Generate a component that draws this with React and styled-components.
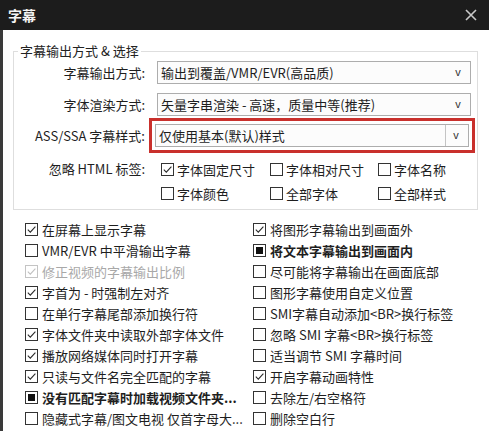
import React from "react";
import styled, { createGlobalStyle } from "styled-components";

const Global = createGlobalStyle`
  html, body { margin: 0; padding: 0; background: #ffffff; }
  body { font-family: "Noto Sans CJK SC", "Noto Sans", sans-serif; }
`;

const Window = styled.div`
  width: 489px;
  height: 431px;
  overflow: hidden;
  display: flex;
  flex-direction: column;
  background: #ffffff;
  color: #1e1e1e;
  font-size: 13px;
`;

const TitleBar = styled.div`
  height: 30px;
  flex: none;
  background: #1c1c1c;
  display: flex;
  align-items: center;
  justify-content: space-between;
  padding: 0 12px 0 8px;
`;

const Title = styled.span`
  color: #f4f4f4;
  font-size: 14px;
  font-weight: 700;
  line-height: 30px;
`;

const Body = styled.div`
  flex: 1;
  border-left: 3px solid #3a3a3a;
  padding: 12px 11px 0 10px;
  display: flex;
  flex-direction: column;
`;

const Group = styled.fieldset`
  margin: 0;
  padding: 0 6px 6px 0;
  border: 1px solid #dedede;
  min-width: 0;
`;

const Legend = styled.legend`
  margin-left: 4px;
  padding: 0 2px;
  font-size: 13px;
  line-height: 18px;
  color: #222;
`;

const FormRow = styled.div`
  display: grid;
  grid-template-columns: 131px 1fr;
  column-gap: ${(p) => p.$gap ?? 12}px;
  align-items: ${(p) => (p.$top ? "start" : "center")};
  margin-top: ${(p) => p.$mt}px;
`;

const Label = styled.span`
  text-align: right;
  line-height: ${(p) => p.$lh ?? 23}px;
  white-space: nowrap;
  color: #1e1e1e;
`;

const Combo = styled.div`
  height: 23px;
  box-sizing: border-box;
  border: 1px solid #adadad;
  background: #fcfcfc;
  display: flex;
  align-items: stretch;
  outline: ${(p) => (p.$highlight ? "3px solid #c9302c" : "none")};
  outline-offset: 3px;
  margin-left: ${(p) => (p.$highlight ? -2 : 0)}px;
  margin-right: ${(p) => (p.$highlight ? 2 : 0)}px;
`;

const ComboText = styled.span`
  flex: 1;
  padding-left: 3px;
  line-height: 21px;
  white-space: nowrap;
  overflow: hidden;
`;

const ComboArrow = styled.span`
  width: 20px;
  flex: none;
  display: flex;
  align-items: center;
  justify-content: center;
  border-left: ${(p) => (p.$divided ? "1px solid #c4c4c4" : "none")};
  font-family: "Liberation Sans", sans-serif;
  font-size: 11px;
  color: #333;
  padding-right: 2px;
  padding-bottom: 1px;
`;

const TagGrid = styled.div`
  display: grid;
  grid-template-columns: 109px 108px 1fr;
  row-gap: 4px;
  padding-left: 4px;
`;

const OptionGrid = styled.div`
  display: grid;
  grid-template-columns: 228px 1fr;
  grid-auto-rows: 21px;
  margin-top: 9px;
  padding-left: 12px;
`;

const Option = styled.label`
  display: flex;
  align-items: center;
  gap: ${(p) => p.$gap ?? 4}px;
  height: ${(p) => p.$h ?? 21}px;
  white-space: nowrap;
  overflow: hidden;
  font-weight: ${(p) => (p.$bold ? 700 : 400)};
  color: ${(p) => (p.$disabled ? "#a8a8a8" : "#1e1e1e")};
`;

const Box = styled.span`
  width: 13px;
  height: 13px;
  flex: none;
  box-sizing: border-box;
  border: 1px solid ${(p) => (p.$disabled ? "#c4c4c4" : "#333")};
  background: #fff;
  display: flex;
  align-items: center;
  justify-content: center;
`;

const Fill = styled.span`
  width: 7px;
  height: 7px;
  background: #111;
`;

function Check({ state, disabled }) {
  return (
    <Box $disabled={disabled}>
      {state === "checked" && (
        <svg width="11" height="11" viewBox="0 0 11 11">
          <polyline
            points="1.8,5.6 4.3,8.1 9.4,2.6"
            fill="none"
            stroke={disabled ? "#c0c0c0" : "#2a2a2a"}
            strokeWidth="1.1"
          />
        </svg>
      )}
      {state === "mixed" && <Fill />}
    </Box>
  );
}

function Opt({ state, label, bold, disabled, h, gap }) {
  return (
    <Option $bold={bold} $disabled={disabled} $h={h} $gap={gap}>
      <Check state={state} disabled={disabled} />
      <span>{label}</span>
    </Option>
  );
}

const CloseIcon = () => (
  <svg width="12" height="12" viewBox="0 0 12 12">
    <path d="M1 1L11 11M11 1L1 11" stroke="#c8c8c8" strokeWidth="1.6" />
  </svg>
);

const left = [
  { s: "checked", t: "在屏幕上显示字幕" },
  { s: "", t: "VMR/EVR 中平滑输出字幕" },
  { s: "checked", t: "修正视频的字幕输出比例", d: true },
  { s: "checked", t: "字首为 - 时强制左对齐" },
  { s: "", t: "在单行字幕尾部添加换行符" },
  { s: "checked", t: "字体文件夹中读取外部字体文件" },
  { s: "checked", t: "播放网络媒体同时打开字幕" },
  { s: "checked", t: "只读与文件名完全匹配的字幕" },
  { s: "mixed", t: "没有匹配字幕时加载视频文件夹...", b: true },
  { s: "", t: "隐藏式字幕/图文电视 仅首字母大..." },
];

const right = [
  { s: "checked", t: "将图形字幕输出到画面外" },
  { s: "mixed", t: "将文本字幕输出到画面内", b: true },
  { s: "", t: "尽可能将字幕输出在画面底部" },
  { s: "", t: "图形字幕使用自定义位置" },
  { s: "", t: "SMI字幕自动添加<BR>换行标签" },
  { s: "", t: "忽略 SMI 字幕<BR>换行标签" },
  { s: "", t: "适当调节 SMI 字幕时间" },
  { s: "checked", t: "开启字幕动画特性" },
  { s: "", t: "去除左/右空格符" },
  { s: "", t: "删除空白行" },
];

export default function App() {
  const rows = [];
  for (let i = 0; i < left.length; i++) {
    rows.push(
      <Opt key={"l" + i} state={left[i].s} label={left[i].t} bold={left[i].b} disabled={left[i].d} />
    );
    rows.push(
      <Opt key={"r" + i} state={right[i].s} label={right[i].t} bold={right[i].b} disabled={right[i].d} />
    );
  }
  return (
    <>
      <Global />
      <Window>
        <TitleBar>
          <Title>字幕</Title>
          <CloseIcon />
        </TitleBar>
        <Body>
          <Group>
            <Legend>字幕输出方式 &amp; 选择</Legend>
            <FormRow $mt={1}>
              <Label>字幕输出方式:</Label>
              <Combo>
                <ComboText>输出到覆盖/VMR/EVR(高品质)</ComboText>
                <ComboArrow>v</ComboArrow>
              </Combo>
            </FormRow>
            <FormRow $mt={9}>
              <Label>字体渲染方式:</Label>
              <Combo>
                <ComboText>矢量字串渲染 - 高速，质量中等(推荐)</ComboText>
                <ComboArrow>v</ComboArrow>
              </Combo>
            </FormRow>
            <FormRow $mt={8}>
              <Label>ASS/SSA 字幕样式:</Label>
              <Combo $highlight>
                <ComboText>仅使用基本(默认)样式</ComboText>
                <ComboArrow $divided>v</ComboArrow>
              </Combo>
            </FormRow>
            <FormRow $mt={12} $top>
              <Label $lh={20}>忽略 HTML 标签:</Label>
              <TagGrid>
                <Opt state="checked" label="字体固定尺寸" h={20} gap={3} />
                <Opt state="" label="字体相对尺寸" h={20} gap={3} />
                <Opt state="" label="字体名称" h={20} gap={3} />
                <Opt state="" label="字体颜色" h={20} gap={3} />
                <Opt state="" label="全部字体" h={20} gap={3} />
                <Opt state="" label="全部样式" h={20} gap={3} />
              </TagGrid>
            </FormRow>
          </Group>
          <OptionGrid>{rows}</OptionGrid>
        </Body>
      </Window>
    </>
  );
}
